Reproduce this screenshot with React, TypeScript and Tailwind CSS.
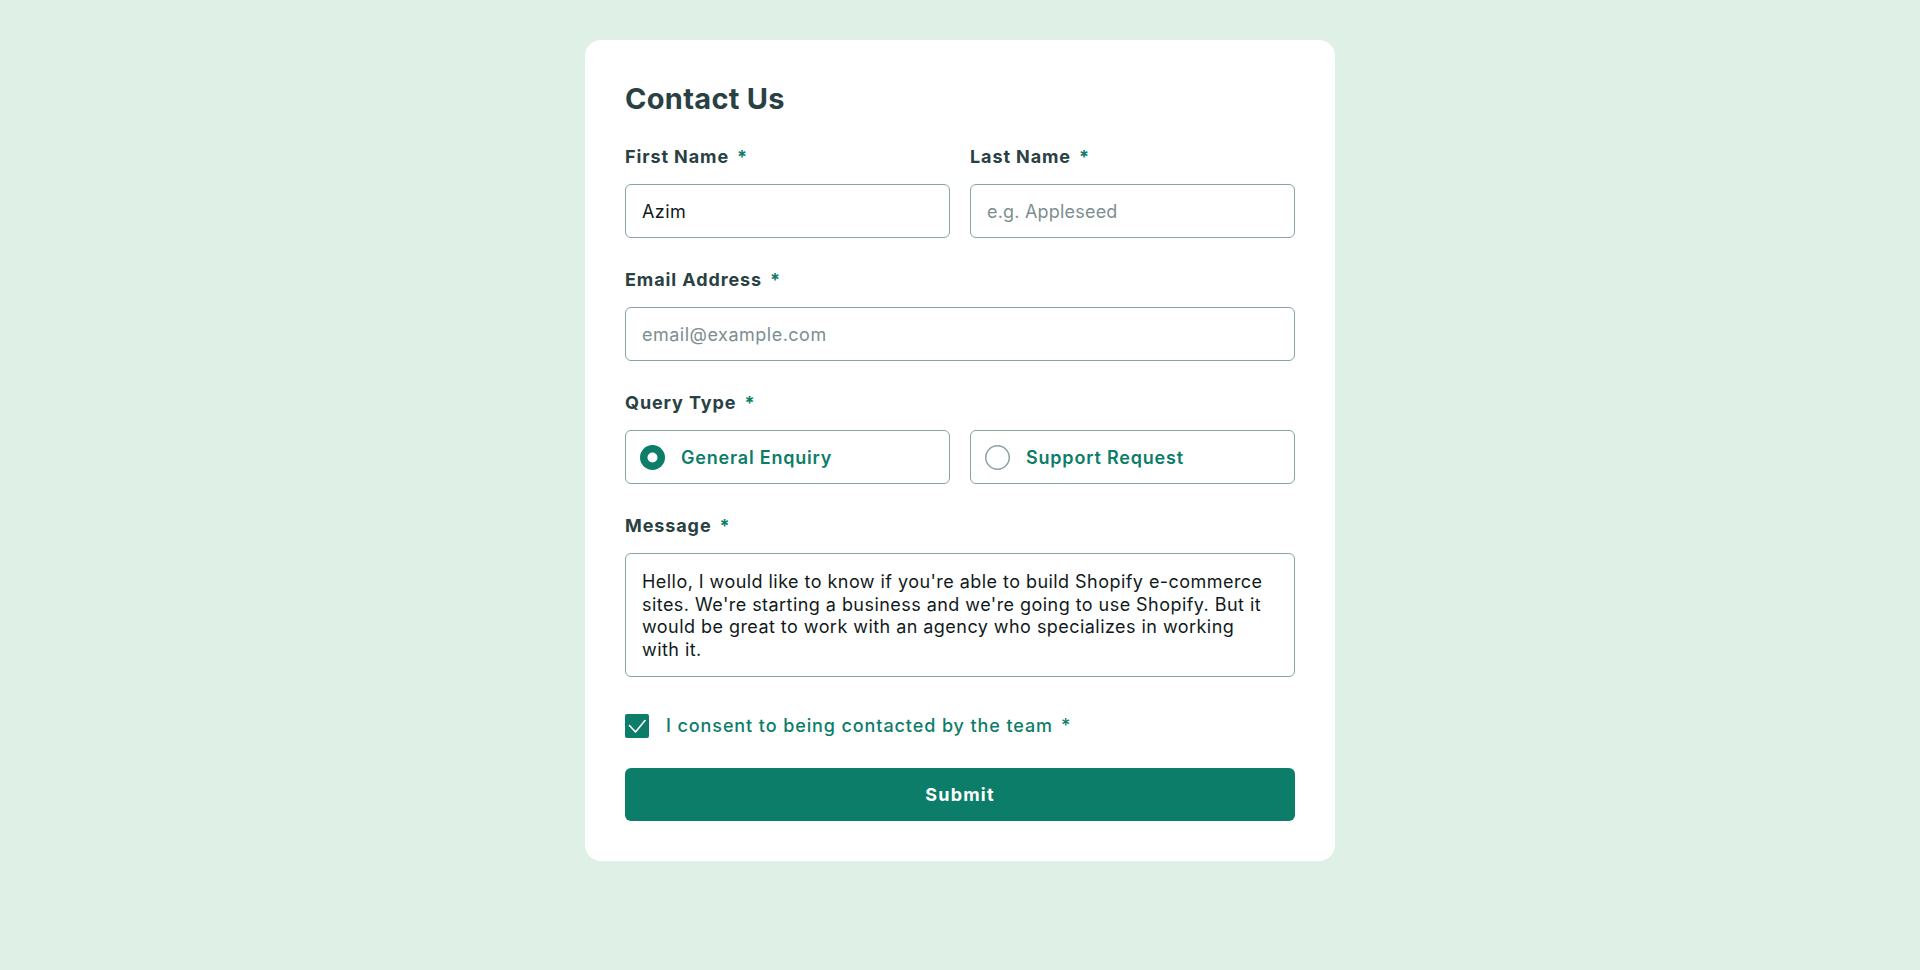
import { useState } from "react";

const font = { fontFamily: "Inter, 'Noto Sans', sans-serif" };

function Label({ children }: { children: React.ReactNode }) {
  return (
    <label className="block h-6 text-lg font-bold leading-6 tracking-[0.9px] text-[#2a4144]">
      {children}
      <span className="ml-2 text-[#0c7d69]">*</span>
    </label>
  );
}

function RadioOption({
  label,
  checked,
  onSelect,
}: {
  label: string;
  checked: boolean;
  onSelect: () => void;
}) {
  return (
    <button
      type="button"
      onClick={onSelect}
      className="flex h-[54px] w-full items-center gap-4 rounded-md border border-[#87a3a6] bg-white pl-[14px] text-left"
    >
      {checked ? (
        <svg width="25" height="25" viewBox="0 0 25 25">
          <circle cx="12.5" cy="12.5" r="12.5" fill="#0c7d69" />
          <circle cx="12.5" cy="12.5" r="5" fill="#ffffff" />
        </svg>
      ) : (
        <svg width="25" height="25" viewBox="0 0 25 25">
          <circle cx="12.5" cy="12.5" r="11.75" fill="none" stroke="#87a3a6" strokeWidth="1.5" />
        </svg>
      )}
      <span className="pt-px text-lg font-semibold tracking-[0.8px] text-[#0c7d69]">{label}</span>
    </button>
  );
}

export default function App() {
  const [query, setQuery] = useState("general");
  const [consent, setConsent] = useState(true);

  return (
    <div className="min-h-screen bg-[#dff1e7] pt-10" style={font}>
      <div className="mx-auto w-[750px] rounded-2xl bg-white p-10">
        <h1 className="text-[29px] font-bold leading-[38px] tracking-[0.3px] text-[#2a4144]">Contact Us</h1>

        <form className="flex flex-col" onSubmit={(e) => e.preventDefault()}>
          <div className="mt-[27px] grid grid-cols-2 gap-x-5">
            <div>
              <Label>First Name</Label>
              <input
                defaultValue="Azim"
                className="mt-[15px] h-[54px] w-full rounded-md border border-[#87a3a6] px-4 text-lg tracking-[0.4px] text-[#111a1b] outline-none"
              />
            </div>
            <div>
              <Label>Last Name</Label>
              <input
                placeholder="e.g. Appleseed"
                className="mt-[15px] h-[54px] w-full rounded-md border border-[#87a3a6] px-4 text-lg tracking-[0.2px] text-[#111a1b] outline-none placeholder:text-[#7d8e90]"
              />
            </div>
          </div>

          <div className="mt-[30px]">
            <Label>Email Address</Label>
            <input
              placeholder="email@example.com"
              className="mt-[15px] h-[54px] w-full rounded-md border border-[#87a3a6] px-4 text-lg tracking-[0.5px] text-[#111a1b] outline-none placeholder:text-[#7d8e90]"
            />
          </div>

          <div className="mt-[30px]">
            <Label>Query Type</Label>
            <div className="mt-[15px] grid grid-cols-2 gap-x-5">
              <RadioOption
                label="General Enquiry"
                checked={query === "general"}
                onSelect={() => setQuery("general")}
              />
              <RadioOption
                label="Support Request"
                checked={query === "support"}
                onSelect={() => setQuery("support")}
              />
            </div>
          </div>

          <div className="mt-[30px]">
            <Label>Message</Label>
            <textarea
              defaultValue="Hello, I would like to know if you're able to build Shopify e-commerce sites. We're starting a business and we're going to use Shopify. But it would be great to work with an agency who specializes in working with it."
              className="mt-[15px] block h-[124px] w-full resize-none rounded-md border border-[#87a3a6] pl-4 pr-6 pt-[17px] text-lg leading-[22.7px] tracking-[0.45px] text-[#111a1b] outline-none"
            />
          </div>

          <div className="mt-9 flex h-[25px] items-center gap-[17px]">
            <button
              type="button"
              onClick={() => setConsent(!consent)}
              className={
                consent
                  ? "flex h-6 w-6 items-center justify-center rounded-[2px] bg-[#0c7d69]"
                  : "h-6 w-6 rounded-[2px] border-2 border-[#87a3a6] bg-white"
              }
            >
              {consent && (
                <svg width="24" height="24" viewBox="0 0 24 24" fill="none">
                  <path d="M4.5 11.5l6 6.5L20 6.5" stroke="#ffffff" strokeWidth="1.6" strokeLinecap="round" strokeLinejoin="round" />
                </svg>
              )}
            </button>
            <span className="text-lg font-medium tracking-[0.9px] text-[#0c7d69]">
              I consent to being contacted by the team
              <span className="ml-2">*</span>
            </span>
          </div>

          <button
            type="submit"
            className="mt-[30px] h-[53px] w-full rounded-md bg-[#0c7d69] text-lg font-bold tracking-[1.2px] text-white"
          >
            Submit
          </button>
        </form>
      </div>
    </div>
  );
}
